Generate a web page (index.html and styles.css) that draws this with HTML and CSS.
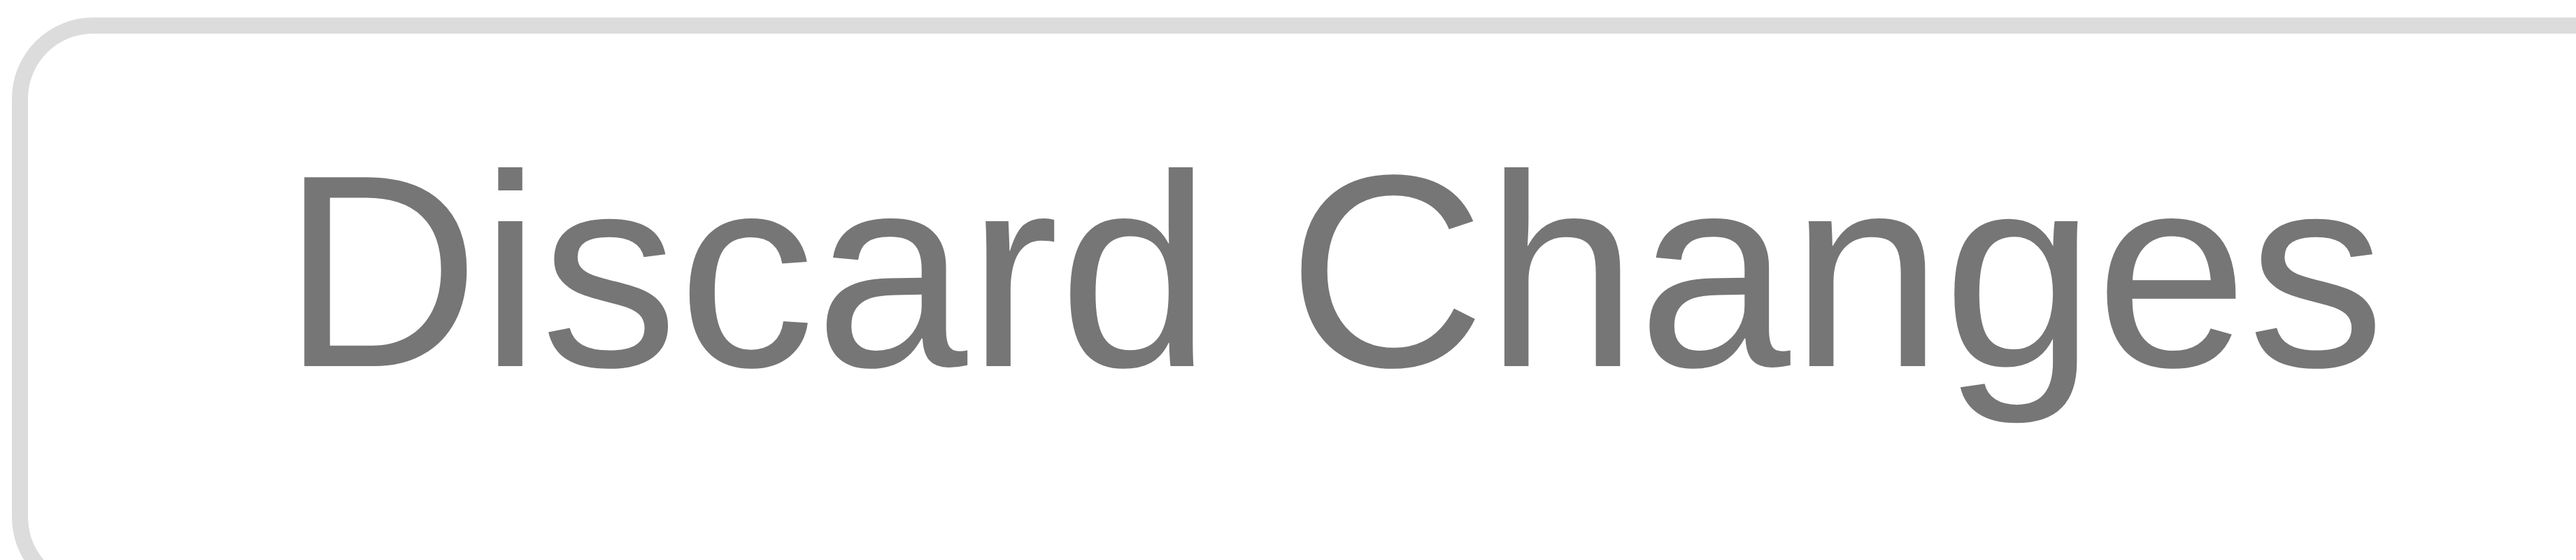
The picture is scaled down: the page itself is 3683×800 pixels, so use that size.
FILE: index.html
```html
<!DOCTYPE html>
<html lang="en">
<head>
<meta charset="utf-8">
<title>Discard Changes</title>
<link rel="stylesheet" href="styles.css">
</head>
<body>
  <div class="page">
    <button class="btn" type="button"><span class="btn-label">Discard Changes</span></button>
  </div>
</body>
</html>
```
FILE: styles.css
```css
html, body {
  margin: 0;
  padding: 0;
  background: #ffffff;
  overflow: hidden;
}

.page {
  display: flex;
  align-items: flex-start;
  padding: 25px 0 0 17px;
  width: 4000px;
}

.btn {
  display: flex;
  align-items: flex-start;
  flex: none;
  box-sizing: border-box;
  margin: 0;
  padding: 114px 363px 220px 363px;
  border: 23px solid #dcdcdc;
  border-radius: 116px;
  background: #ffffff;
  color: #767676;
  font-family: "Liberation Sans", Arial, sans-serif;
  font-size: 392px;
  line-height: 450px;
  white-space: nowrap;
  text-align: left;
  cursor: pointer;
}

.btn-label {
  display: block;
}
```
